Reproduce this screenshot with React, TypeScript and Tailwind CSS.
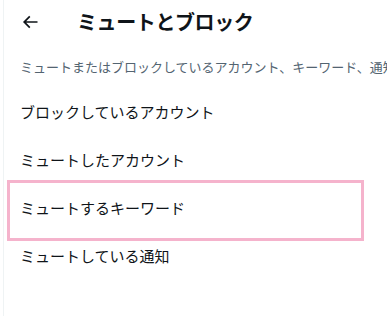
import React from "react";

const items = [
  "ブロックしているアカウント",
  "ミュートしたアカウント",
  "ミュートするキーワード",
  "ミュートしている通知",
];

export default function App() {
  return (
    <div
      className="relative w-[387px] h-[316px] bg-white overflow-hidden text-[#0f1419]"
      style={{ fontFamily: '"Noto Sans CJK JP", "Noto Sans", sans-serif' }}
    >
      <div className="ml-[3px] h-full border-l border-[#eff3f4]">
        <div className="h-[44px] flex items-center px-4">
          <div className="w-[57px] flex items-center">
            <svg viewBox="0 0 24 24" className="w-5 h-5 fill-[#0f1419]">
              <path d="M7.414 13l5.043 5.04-1.414 1.42L3.586 12l7.457-7.46 1.414 1.42L7.414 11H21v2H7.414z" />
            </svg>
          </div>
          <h1 className="text-[20px] leading-6 font-bold whitespace-nowrap tracking-[-0.4px]">ミュートとブロック</h1>
        </div>
        <div className="h-[44px] flex items-center px-4 pt-[2px]">
          <p className="text-[13px] leading-4 text-[#536471] whitespace-nowrap">
            ミュートまたはブロックしているアカウント、キーワード、通知を管理します。
          </p>
        </div>
        {items.map((t) => (
          <div key={t} className="h-[48px] flex items-center px-4">
            <span className="text-[15px] leading-5 whitespace-nowrap">{t}</span>
          </div>
        ))}
      </div>
      <div className="absolute left-[7px] top-[180px] w-[357px] h-[61px] border-[3px] border-[#f5b3cc]" />
    </div>
  );
}
